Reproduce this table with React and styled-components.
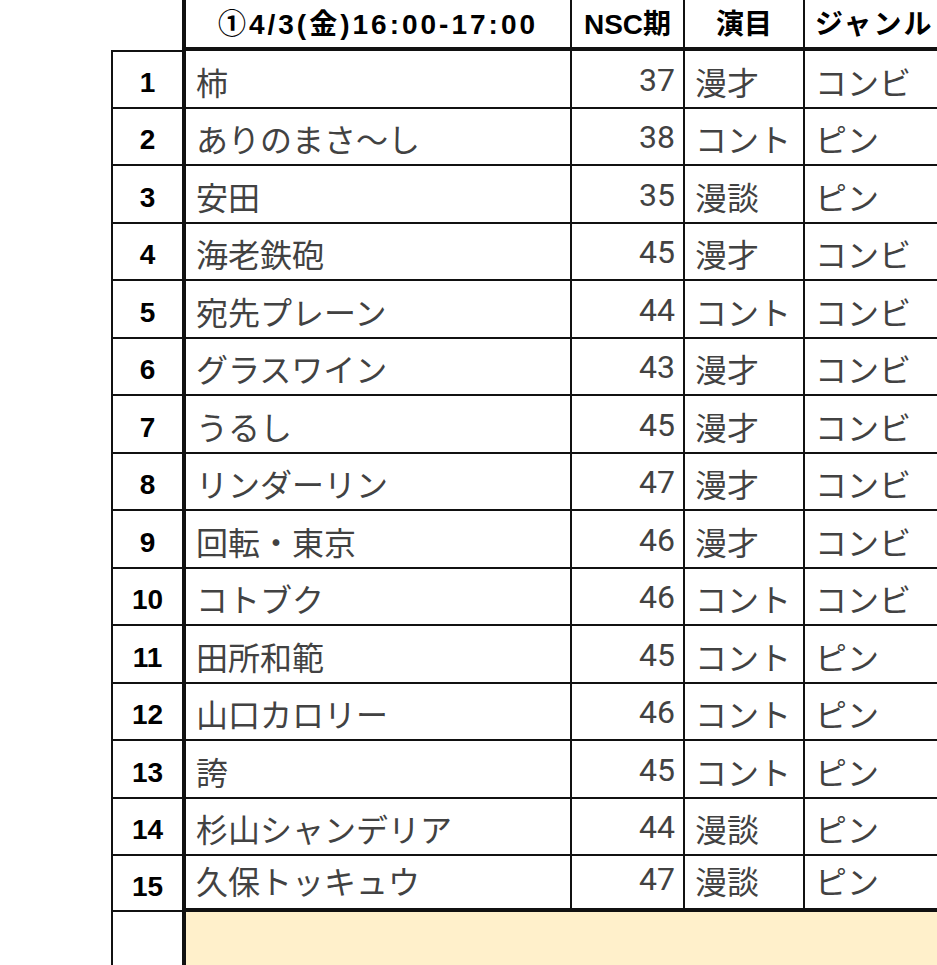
import React from 'react'
import styled, { createGlobalStyle } from 'styled-components'

const rows = [
  ['柿', 37, '漫才', 'コンビ'],
  ['ありのまさ〜し', 38, 'コント', 'ピン'],
  ['安田', 35, '漫談', 'ピン'],
  ['海老鉄砲', 45, '漫才', 'コンビ'],
  ['宛先プレーン', 44, 'コント', 'コンビ'],
  ['グラスワイン', 43, '漫才', 'コンビ'],
  ['うるし', 45, '漫才', 'コンビ'],
  ['リンダーリン', 47, '漫才', 'コンビ'],
  ['回転・東京', 46, '漫才', 'コンビ'],
  ['コトブク', 46, 'コント', 'コンビ'],
  ['田所和範', 45, 'コント', 'ピン'],
  ['山口カロリー', 46, 'コント', 'ピン'],
  ['誇', 45, 'コント', 'ピン'],
  ['杉山シャンデリア', 44, '漫談', 'ピン'],
  ['久保トッキュウ', 47, '漫談', 'ピン'],
]

const App = () => {
  return (
    <>
      <GlobalStyle />
      <Sheet>
        <Spacer />
        <Corner />
        <HeadCell $first $align="center">
          <HeadTitle>①4/3(金)16:00-17:00</HeadTitle>
        </HeadCell>
        <HeadCell $align="center">NSC期</HeadCell>
        <HeadCell $align="center">演目</HeadCell>
        <HeadCell $align="flex-start" $spacing={2}>ジャンル</HeadCell>

        {rows.map(([name, term, act, genre], i) => {
          const last = i === rows.length - 1
          return (
            <React.Fragment key={name}>
              <Spacer />
              <NumCell $last={last}>{i + 1}</NumCell>
              <Cell $first $last={last}>{name}</Cell>
              <Cell $last={last} $align="flex-end">
                <Digits>{term}</Digits>
              </Cell>
              <Cell $last={last}>{act}</Cell>
              <Cell $last={last}>{genre}</Cell>
            </React.Fragment>
          )
        })}

        <Spacer />
        <NumCell $blank />
        <NoteCell />
      </Sheet>
    </>
  )
}

const GlobalStyle = createGlobalStyle`
  html, body {
    margin: 0;
    padding: 0;
    background: #ffffff;
  }
  body {
    width: 937px;
    height: 965px;
    overflow: hidden;
    font-family: 'Noto Sans CJK JP', sans-serif;
  }
`

const Sheet = styled.div`
  display: grid;
  grid-template-columns: 111px 71px 388px 113px 120px 1fr;
  grid-template-rows: 51px repeat(14, 57.5px) 56px 60px;
  width: 937px;
`

const Spacer = styled.div``

const Corner = styled.div`
  border-bottom: 2px solid #111;
  height: 50px;
`

const HeadCell = styled.div`
  display: flex;
  align-items: center;
  justify-content: ${(p) => p.$align};
  box-sizing: border-box;
  padding: 0 10px 3px;
  border-left: ${(p) => (p.$first ? 4 : 2)}px solid #111;
  border-bottom: 4px solid #111;
  font-family: 'Liberation Sans', 'Noto Sans CJK JP', sans-serif;
  font-weight: 700;
  font-size: 28px;
  letter-spacing: ${(p) => p.$spacing || 0}px;
  color: #000;
  white-space: nowrap;
  overflow: hidden;
`

const HeadTitle = styled.span`
  letter-spacing: 3px;
`

const NumCell = styled.div`
  display: flex;
  align-items: flex-end;
  justify-content: center;
  box-sizing: border-box;
  padding-bottom: ${(p) => (p.$last ? 9 : 10)}px;
  border-left: 2px solid #111;
  border-bottom: ${(p) => (p.$blank ? 0 : 2)}px solid #111;
  font-family: 'Liberation Sans', sans-serif;
  font-weight: 700;
  font-size: 28px;
  line-height: 1;
  color: #000;
`

const Cell = styled.div`
  display: flex;
  align-items: flex-end;
  justify-content: ${(p) => p.$align || 'flex-start'};
  box-sizing: border-box;
  padding: 0 8px ${(p) => (p.$last ? 12 : 10)}px 10px;
  border-left: ${(p) => (p.$first ? 4 : 2)}px solid #111;
  border-bottom: ${(p) => (p.$last ? 4 : 2)}px solid #111;
  font-size: 32px;
  line-height: 1;
  color: #424242;
  white-space: nowrap;
  overflow: hidden;
`

const Digits = styled.span`
  font-family: 'Roboto', sans-serif;
  font-size: 32px;
  padding-bottom: 1px;
`

const NoteCell = styled.div`
  grid-column: span 4;
  border-left: 4px solid #111;
  background: #fff0cb;
`

export default App
